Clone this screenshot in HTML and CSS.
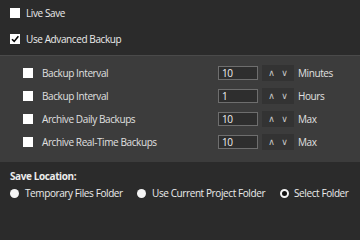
FILE: index.html
```html
<!DOCTYPE html>
<html>
<head>
<meta charset="utf-8">
<link rel="stylesheet" href="styles.css">
</head>
<body>
<div class="top">
  <div class="row"><span class="cb"></span><span class="lbl">Live Save</span></div>
  <div class="row"><span class="cb checked"><svg viewBox="0 0 10 10" width="10" height="10"><path d="M2 5.2 L4.2 7.4 L8.4 2.2" fill="none" stroke="#000" stroke-width="1.6"/></svg></span><span class="lbl">Use Advanced Backup</span></div>
</div>
<div class="band">
  <div class="brow"><span class="cb"></span><span class="blbl">Backup Interval</span><span class="inp">10</span><span class="spin"><span>&#8743;</span><span>&#8744;</span></span><span class="unit">Minutes</span></div>
  <div class="brow"><span class="cb"></span><span class="blbl">Backup Interval</span><span class="inp">1</span><span class="spin"><span>&#8743;</span><span>&#8744;</span></span><span class="unit">Hours</span></div>
  <div class="brow"><span class="cb"></span><span class="blbl">Archive Daily Backups</span><span class="inp">10</span><span class="spin"><span>&#8743;</span><span>&#8744;</span></span><span class="unit">Max</span></div>
  <div class="brow"><span class="cb"></span><span class="blbl">Archive Real-Time Backups</span><span class="inp">10</span><span class="spin"><span>&#8743;</span><span>&#8744;</span></span><span class="unit">Max</span></div>
</div>
<div class="bottom">
  <div class="title">Save Location:</div>
  <div class="radios">
    <div class="radio r1"><span class="rb"></span><span>Temporary Files Folder</span></div>
    <div class="radio r2"><span class="rb"></span><span>Use Current Project Folder</span></div>
    <div class="radio r3"><span class="rb sel"></span><span>Select Folder</span></div>
  </div>
</div>
</body>
</html>
```
FILE: styles.css
```css
html, body {
  margin: 0;
  padding: 0;
  background: #2b2b2b;
  width: 360px;
  height: 203px;
  overflow: hidden;
  font-family: "Open Sans", "Noto Sans", sans-serif;
  font-size: 10px;
  letter-spacing: -0.4px;
  color: #ececec;
}
.top {
  height: 55px;
  padding-left: 10px;
  box-sizing: border-box;
  padding-top: 2px;
}
.row {
  display: flex;
  align-items: center;
  height: 21px;
  margin-bottom: 5px;
}
.cb {
  width: 10px;
  height: 10px;
  background: #fff;
  flex: none;
  display: flex;
  align-items: center;
  justify-content: center;
}
.lbl {
  margin-left: 6px;
}
.band {
  background: #3c3c3c;
  border-top: 1px solid #4a4a4a;
  height: 107px;
  box-sizing: border-box;
  padding-top: 5px;
  padding-left: 23px;
}
.brow {
  display: flex;
  align-items: center;
  height: 23px;
}
.blbl {
  margin-left: 9px;
  width: 176px;
  color: #e0e0e0;
}
.inp {
  width: 40px;
  height: 14px;
  box-sizing: border-box;
  border: 1px solid #6e6e6e;
  background: #2e2e2e;
  color: #f0f0f0;
  padding-left: 3px;
  line-height: 12px;
}
.spin {
  margin-left: 4px;
  width: 32px;
  height: 16px;
  background: #333333;
  display: flex;
  align-items: center;
  justify-content: space-evenly;
  color: #c8c8c8;
  font-size: 9px;
  letter-spacing: 0;
  font-family: "DejaVu Sans", sans-serif;
}
.unit {
  margin-left: 4px;
  color: #e0e0e0;
}
.bottom {
  padding-left: 10px;
  padding-top: 6px;
}
.title {
  font-weight: bold;
  height: 16px;
  line-height: 16px;
}
.radios {
  display: flex;
  align-items: center;
  height: 18px;
}
.radio {
  display: flex;
  align-items: center;
  flex: none;
}
.r1 { width: 127px; }
.r2 { width: 143px; }
.rb {
  width: 9px;
  height: 9px;
  border-radius: 50%;
  background: #f4f4f4;
  margin-right: 6px;
  box-sizing: border-box;
  flex: none;
}
.rb.sel {
  background: #111;
  border: 2.5px solid #f4f4f4;
  margin-right: 5px;
}
```
